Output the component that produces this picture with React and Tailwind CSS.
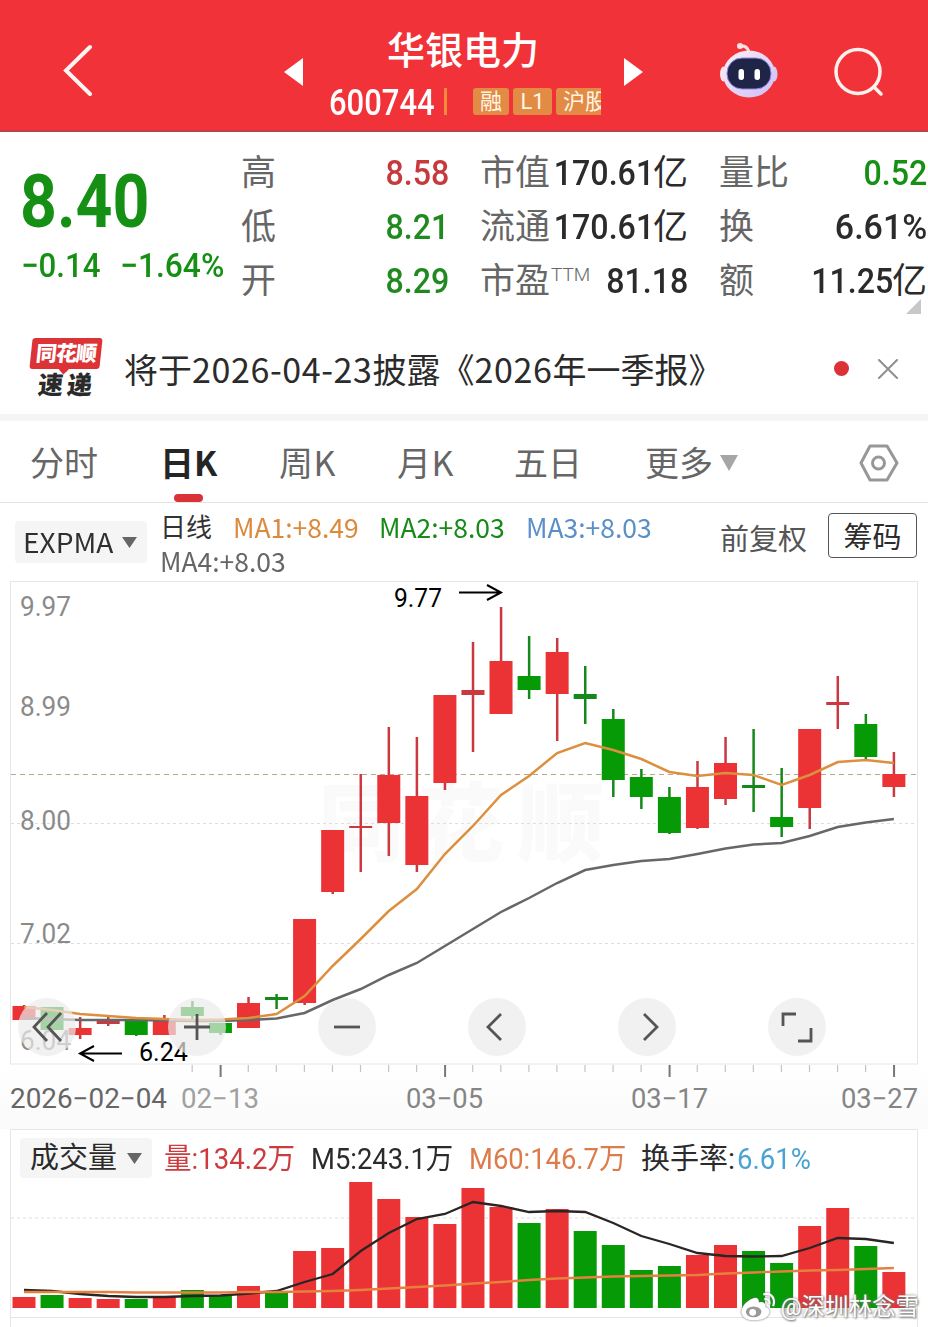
import React from "react";

const UP = "#eb3235";
const DOWN = "#069a06";
const STEP = 28.06;

const cx = (i) => 24 + i * STEP;

// [high, body top, body bottom, low, rising]
const candles = [
  [1005, 1006, 1020, 1020, 1],
  [1007, 1007, 1030, 1030, 0],
  [1017, 1028, 1035, 1039, 1],
  [1015, 1021, 1024, 1026, 1],
  [1021, 1021, 1035, 1036, 0],
  [1015, 1019, 1035, 1035, 1],
  [1001, 1007, 1016, 1019, 0],
  [1023, 1023, 1033, 1035, 0],
  [997, 1003, 1028, 1028, 1],
  [994, 997, 1000, 1009, 0],
  [919, 919, 1003, 1005, 1],
  [830, 830, 892, 894, 1],
  [774, 826, 828, 872, 1],
  [727, 775, 823, 856, 1],
  [737, 796, 865, 872, 1],
  [695, 695, 783, 790, 1],
  [642, 690, 695, 752, 1],
  [607, 661, 714, 714, 1],
  [636, 676, 690, 699, 0],
  [638, 652, 694, 741, 1],
  [666, 694, 699, 724, 0],
  [709, 719, 780, 797, 0],
  [769, 777, 797, 809, 0],
  [787, 797, 833, 834, 0],
  [761, 787, 828, 829, 1],
  [737, 763, 799, 805, 1],
  [729, 785, 788, 812, 0],
  [768, 817, 827, 837, 0],
  [729, 729, 808, 829, 1],
  [676, 702, 705, 729, 1],
  [714, 724, 757, 759, 0],
  [752, 774, 787, 797, 1],
];

const fastLine = [
  1007, 1010, 1014, 1016, 1018, 1019, 1020, 1019.5, 1018, 1014, 996, 966, 939, 911, 889, 854,
  826, 795, 776, 753, 743, 750, 759, 772, 776, 773, 775, 785, 775, 762, 760, 763,
];
const slowLine = [
  1018, 1019, 1020, 1020, 1020, 1020.5, 1021, 1021, 1020, 1018.5, 1013, 1000, 989, 975, 963, 946,
  929, 912, 898, 883, 870, 865, 861, 859, 854, 848.5, 844.5, 843, 836, 827, 822.5, 819,
];

const volumes = [
  1297, 1295, 1298, 1299, 1299, 1297, 1290, 1296, 1286, 1292, 1251, 1248, 1182, 1199, 1217, 1224,
  1188, 1207, 1223, 1209, 1231, 1245, 1270, 1266, 1255, 1245, 1251, 1263, 1226, 1208, 1246, 1272,
];
const vol5 = [
  1290, 1291, 1294, 1296, 1297, 1297, 1296, 1295.5, 1293.5, 1291, 1282, 1274, 1251, 1233, 1219, 1214,
  1202, 1206, 1212, 1211, 1212, 1223, 1236, 1244, 1253, 1256, 1256.5, 1256, 1248, 1238, 1239, 1243,
];
const vol60 = [
  1292, 1292, 1292, 1292, 1292.5, 1292.5, 1292.5, 1292.5, 1292, 1292, 1291.5, 1291, 1290, 1288.5, 1287, 1285.5,
  1283.5, 1282, 1280, 1278.5, 1277.5, 1276.5, 1276, 1275.5, 1275, 1273.5, 1272.5, 1271.5, 1270.5, 1270, 1269, 1268,
];

const toPoints = (line) => line.map((y, i) => `${cx(i)},${y}`).join(" ");

// flat candles are drawn in the darker wick colour
const bodyColor = (up, height) => {
  if (height > 5) return up ? UP : DOWN;
  return up ? "#c9393f" : "#15881a";
};

function ChartText({ x, y, w, size = 27, fill = "#8b8b8b", children }) {
  return (
    <text x={x} y={y} fontSize={size} fill={fill} textLength={w} lengthAdjust="spacingAndGlyphs">
      {children}
    </text>
  );
}

function Header() {
  return (
    <header className="h-[132px] bg-[#f13239] border-b-2 border-[#b8434a] flex items-start text-white">
      <svg className="w-[32px] h-[52px] ml-[62px] mt-[44px]" viewBox="0 0 32 52" fill="none" stroke="#fff5f2" strokeWidth="4" strokeLinecap="round">
        <path d="M28 3 L4 26.500 L28 50" />
      </svg>
      <svg className="w-[20px] h-[28px] ml-[190px] mt-[58px]" viewBox="0 0 20 28" fill="#fff">
        <path d="M0 14 L19 0 V28 Z" />
      </svg>
      <div className="ml-[25px] w-[272px] pt-[32px]">
        <h1 className="ml-[58px] text-[38px] leading-[38px] font-medium whitespace-nowrap">华银电力</h1>
        <div className="flex items-start mt-[18px] h-[30px]">
          <span className="w-[105px] text-[36px] leading-[30px] font-medium">
            <span className="inline-block origin-left scale-x-[.86]">600744</span>
          </span>
          <span className="w-[3px] h-[27px] ml-[10px] bg-[#f28b3c]" />
          <div className="ml-[26px] w-[128px] flex gap-[4px] overflow-hidden text-[22px] leading-[27px] whitespace-nowrap text-[#fff6e6]">
            <span className="w-[36px] shrink-0 rounded-[3px] bg-[#e28b45] text-center">融</span>
            <span className="w-[39px] shrink-0 rounded-[3px] bg-[#e28b45] text-center">L1</span>
            <span className="w-[60px] shrink-0 rounded-[3px] bg-[#e28b45] pl-[7px]">沪股</span>
          </div>
        </div>
      </div>
      <svg className="w-[20px] h-[28px] ml-[23px] mt-[58px]" viewBox="0 0 20 28" fill="#fff">
        <path d="M0 0 L19 14 L0 28 Z" />
      </svg>
      <svg className="w-[60px] h-[58px] ml-[75px] mt-[42px]" viewBox="0 0 60 58">
        <defs>
          <linearGradient id="shell" x1="0" y1="0" x2="1" y2="1">
            <stop offset="0" stopColor="#fff1f2" />
            <stop offset=".55" stopColor="#e3d5f5" />
            <stop offset="1" stopColor="#cdbcf7" />
          </linearGradient>
        </defs>
        <path d="M21 4 Q28 3 30 10" fill="none" stroke="#ffd9dc" strokeWidth="3" />
        <circle cx="21" cy="4" r="3" fill="#ffe3e5" />
        <ellipse cx="4.500" cy="32" rx="3.500" ry="7.500" fill="#f8e3ee" />
        <ellipse cx="55" cy="32" rx="3.500" ry="7.500" fill="#d8c8f6" />
        <ellipse cx="30" cy="32" rx="26" ry="23.500" fill="url(#shell)" />
        <rect x="8" y="16" width="44" height="31" rx="15" fill="#1e2547" stroke="#8f88e8" strokeWidth="1" />
        <rect x="19.500" y="27" width="5.500" height="11" rx="2.700" fill="#fff" />
        <rect x="35.500" y="27" width="5.500" height="11" rx="2.700" fill="#fff" />
      </svg>
      <svg className="w-[52px] h-[52px] ml-[54px] mt-[46px]" viewBox="0 0 52 52" fill="none" stroke="#fff0ee" strokeWidth="3.500" strokeLinecap="round">
        <circle cx="25" cy="25.500" r="22" />
        <path d="M41 41 L48 48" />
      </svg>
    </header>
  );
}

function Stat({ label, sup, value, unit, color = "text-[#2b2b2b]" }) {
  return (
    <div className="flex h-[54px] items-center justify-between whitespace-nowrap text-[35px] leading-none">
      <span className="flex text-[#666]">
        {label}
        {sup && <sup className="ml-px top-[1px] h-[20px] text-[19px] leading-none font-light">{sup}</sup>}
      </span>
      <span className={`-ml-[12px] flex font-medium ${color}`}>
        <span className={`origin-right ${value.endsWith("%") ? "scale-x-[.97]" : "scale-x-[.92]"}`}>{value}</span>
        {unit && <span className="-ml-[1px] font-normal">{unit}</span>}
      </span>
    </div>
  );
}

function Quote() {
  return (
    <section className="relative flex h-[198px] pt-[14px]">
      <div className="ml-[20px] w-[221px] text-[#159015]">
        <div className="mt-[20px] h-[72px] text-[74px] leading-[72px] font-bold">
          <span className="inline-block origin-left scale-x-[.87]">8.40</span>
        </div>
        <div className="mt-[10px] ml-px flex text-[34px] leading-[34px] font-medium whitespace-nowrap">
          <span className="w-[99px]">
            <span className="inline-block origin-left scale-x-[.92]">−0.14</span>
          </span>
          <span className="inline-block origin-left scale-x-[.935]">−1.64%</span>
        </div>
      </div>
      <div className="w-[208px]">
        <Stat label="高" value="8.58" color="text-[#c53a3d]" />
        <Stat label="低" value="8.21" color="text-[#208a20]" />
        <Stat label="开" value="8.29" color="text-[#208a20]" />
      </div>
      <div className="ml-[31px] w-[208px]">
        <Stat label="市值" value="170.61" unit="亿" />
        <Stat label="流通" value="170.61" unit="亿" />
        <Stat label="市盈" sup="TTM" value="81.18" />
      </div>
      <div className="ml-[31px] w-[208px]">
        <Stat label="量比" value="0.52" color="text-[#159015]" />
        <Stat label="换" value="6.61%" />
        <Stat label="额" value="11.25" unit="亿" />
      </div>
      <svg className="absolute right-[7px] top-[167px] h-[15px] w-[15px]" viewBox="0 0 15 15" fill="#c8c8c8">
        <path d="M15 0 V15 H0 Z" />
      </svg>
    </section>
  );
}

function News() {
  return (
    <section className="flex h-[91px] items-start border-b-[7px] border-[#f5f5f5]">
      <div className="ml-[31px] mt-[8px] w-[72px]">
        <div className="relative h-[31px] w-[70px] -skew-x-6 rounded-[3px] bg-[#dc3337] text-center text-[21px] leading-[32px] font-black whitespace-nowrap text-white">
          <span className="inline-block -tracking-[1px]">同花顺</span>
          <span className="absolute left-[31px] top-[28px] h-[7px] w-[7px] rotate-45 bg-[#dc3337]" />
        </div>
        <div className="mt-[4px] ml-[7px] flex -skew-x-6 gap-[4px] text-[25px] leading-[26px] font-black text-[#2a2a2a]">
          <span>速</span>
          <span>递</span>
        </div>
      </div>
      <p className="ml-[21px] mt-[20px] h-[38px] w-[660px] text-[34px] leading-[38px] whitespace-nowrap text-[#2b2b2b] font-['Noto_Sans_CJK_SC',sans-serif]">
        将于<span className="tracking-[.6px]">2026-04-23</span>披露《<span className="tracking-[.6px]">2026</span>年一季报》
      </p>
      <span className="ml-[50px] mt-[31px] h-[15px] w-[15px] rounded-full bg-[#dc3237]" />
      <svg className="ml-[29px] mt-[29px] h-[20px] w-[20px]" viewBox="0 0 20 20" stroke="#8f8f8f" strokeWidth="2" strokeLinecap="round">
        <path d="M1 1 L19 19 M19 1 L1 19" />
      </svg>
    </section>
  );
}

function Tabs() {
  return (
    <nav className="flex h-[82px] items-start border-b border-[#e4e4e4] pt-[22px] text-[34px] leading-[38px] whitespace-nowrap text-[#666] font-['Noto_Sans_CJK_SC',sans-serif]">
      <span className="ml-[30px] w-[130px]">分时</span>
      <span className="relative w-[119px] font-bold text-[#252525]">
        日K
        <span className="absolute left-[14px] top-[51px] h-[8px] w-[29px] rounded-full bg-[#d93237]" />
      </span>
      <span className="w-[118px] tracking-[.5px]">周K</span>
      <span className="w-[117px] tracking-[.5px]">月K</span>
      <span className="w-[131px]">五日</span>
      <span className="w-[75px]">更多</span>
      <svg className="mt-[12px] h-[16px] w-[18px]" viewBox="0 0 18 16" fill="#a6a6a6">
        <path d="M0 0 H18 L9 16 Z" />
      </svg>
      <svg className="ml-[121px] mt-px h-[38px] w-[40px]" viewBox="0 0 40 38" fill="none" stroke="#979797" strokeWidth="3" strokeLinejoin="round">
        <path d="M11 2 H28 L38 19 L28 36 H11 L2 19 Z" />
        <circle cx="19.500" cy="19" r="6" />
      </svg>
    </nav>
  );
}

function Indicators() {
  return (
    <section className="flex h-[78px] items-start whitespace-nowrap text-[27px] leading-[32px] font-['Noto_Sans_CJK_SC',sans-serif]">
      <div className="ml-[15px] mt-[18px] flex h-[42px] w-[132px] items-center rounded-[4px] bg-[#f5f5f5] pl-[8px] text-[#2f2f2f]">
        <span className="w-[99px]">
          <span className="inline-block origin-left scale-x-[1.04]">EXPMA</span>
        </span>
        <svg className="h-[11px] w-[15px]" viewBox="0 0 15 11" fill="#666">
          <path d="M0 0 H15 L7.500 11 Z" />
        </svg>
      </div>
      <div className="ml-[13px] mt-[8px] w-[560px]">
        <div className="flex">
          <span className="w-[73px] text-[26px] leading-[30px] text-[#333]">日线</span>
          <span className="w-[146px] text-[#db8a3c]">
            <span className="inline-block origin-left scale-x-[.98]">MA1:+8.49</span>
          </span>
          <span className="w-[147px] text-[#178a17]">
            <span className="inline-block origin-left scale-x-[.98]">MA2:+8.03</span>
          </span>
          <span className="inline-block origin-left scale-x-[.98] text-[#5a8fc8]">MA3:+8.03</span>
        </div>
        <div className="mt-[2px] text-[#666]">
          <span className="inline-block origin-left scale-x-[.98]">MA4:+8.03</span>
        </div>
      </div>
      <span className="mt-[18px] w-[108px] text-[29px] text-[#555]">前复权</span>
      <span className="mt-[10px] h-[45px] w-[89px] rounded-[4px] border border-[#555] text-center text-[29px] leading-[43px] text-[#2b2b2b]">筹码</span>
    </section>
  );
}

const toolIcons = [
  ["M14 -14 L1 0 L14 14 M0 -14 L-13 0 L0 14", "prev"],
  ["M-13 0 H13 M0 -13 V13", "zoom in"],
  ["M-13 0 H13", "zoom out"],
  ["M4 -13 L-9 0 L4 13", "left"],
  ["M-3 -13 L10 0 L-3 13", "right"],
  ["M-14 -1 V-13 H-1 M14 1 V14 H1", "full screen"],
];

function KChart() {
  return (
    <section className="relative h-[548px] bg-gradient-to-b from-white from-88% to-[#fafafa]">
      <svg className="block h-[548px] w-full" viewBox="0 581 928 548">
        <text x="318" y="855" fontSize="86" fontWeight="900" textLength="286" fill="#000" fillOpacity=".018">同花顺</text>
        <rect x="10.500" y="581.500" width="907" height="482.500" fill="none" stroke="#e6e6e6" />
        <path d="M11 823.500 H917 M11 943.500 H917" stroke="#dedede" strokeDasharray="3 3" />
        <path d="M11 774.500 H917" stroke="#b8a88a" strokeDasharray="5 4" />
        <ChartText x={20} y={616} w={51}>9.97</ChartText>
        <ChartText x={20} y={716} w={51}>8.99</ChartText>
        <ChartText x={20} y={830} w={51}>8.00</ChartText>
        <ChartText x={20} y={943} w={51}>7.02</ChartText>
        <ChartText x={20} y={1050} w={51}>6.04</ChartText>
        {candles.map(([high, top, bottom, low, up], i) => (
          <g key={i}>
            <rect x={cx(i) - 1.2} y={high} width="2.500" height={low - high} fill={up ? "#c9393f" : "#15881a"} />
            <rect x={cx(i) - 11.5} y={top} width="23" height={bottom - top} fill={bodyColor(up, bottom - top)} />
          </g>
        ))}
        <polyline points={toPoints(slowLine)} fill="none" stroke="#666769" strokeWidth="2.500" />
        <polyline points={toPoints(fastLine)} fill="none" stroke="#dc903f" strokeWidth="2.500" />
        <g fill="none" stroke="#000" strokeWidth="2">
          <path d="M459 592.500 H500 M487 585 L501 592.500 L487 600" />
          <path d="M122 1053.500 H81 M94 1046 L80 1053.500 L94 1061" />
        </g>
        <ChartText x={394} y={607} w={48} size={26} fill="#000">9.77</ChartText>
        <ChartText x={139} y={1061} w={49} size={26} fill="#000">6.24</ChartText>
        {candles.map((_, i) => {
          const major = i === 7 || i === 15 || i === 23 || i === 31;
          if (i < 6) return null;
          return (
            <rect key={i} x={cx(i) - 0.8} y={1065} width={major ? 2 : 1.2} height={major ? 12 : 7} fill={major ? "#777" : "#c4c4c4"} />
          );
        })}
        <ChartText x={10} y={1108} w={157} fill="#666">2026−02−04</ChartText>
        <ChartText x={181} y={1108} w={78} fill="#a0a0a0">02−13</ChartText>
        <ChartText x={406} y={1108} w={77} fill="#858585">03−05</ChartText>
        <ChartText x={631} y={1108} w={77} fill="#858585">03−17</ChartText>
        <ChartText x={841} y={1108} w={77} fill="#858585">03−27</ChartText>
      </svg>
      <div className="absolute left-[18px] top-[417px] flex gap-[92px]">
        {toolIcons.map(([d, name]) => (
          <button key={name} aria-label={name} className="h-[58px] w-[58px] rounded-full bg-[#ebebeb]/70">
            <svg className="h-[58px] w-[58px]" viewBox="-29 -29 58 58" fill="none" stroke="#555" strokeWidth="2.800">
              <path d={d} />
            </svg>
          </button>
        ))}
      </div>
    </section>
  );
}

function VolumeChart() {
  return (
    <section className="relative mx-[10px] h-[189px] border border-[#e6e6e6]">
      <div className="flex h-[50px] items-start pt-[8px] text-[29px] leading-[42px] whitespace-nowrap">
        <div className="ml-[9px] flex h-[40px] w-[132px] items-center rounded-[4px] bg-[#f5f5f5] pl-[10px] text-[#2b2b2b]">
          <span className="w-[97px]">成交量</span>
          <svg className="h-[11px] w-[15px]" viewBox="0 0 15 11" fill="#666">
            <path d="M0 0 H15 L7.500 11 Z" />
          </svg>
        </div>
        <span className="ml-[12px] w-[147px] text-[#cc3c3f]">
          <span className="inline-block origin-left scale-x-[.95]">量:134.2万</span>
        </span>
        <span className="w-[158px] text-[#2b2b2b]">
          <span className="inline-block origin-left scale-x-[.945]">M5:243.1万</span>
        </span>
        <span className="w-[172px] text-[#dd7b4b]">
          <span className="inline-block origin-left scale-x-[.943]">M60:146.7万</span>
        </span>
        <span className="w-[96px] text-[#2b2b2b]">换手率:</span>
        <span className="inline-block origin-left scale-x-[.95] text-[#4ba3d3]">6.61%</span>
      </div>
      <svg className="block h-[137px] w-full" viewBox="11 1180 906 137" preserveAspectRatio="none">
        <path d="M11 1218 H917" stroke="#dedede" strokeDasharray="3 3" />
        {volumes.map((top, i) => (
          <rect key={i} x={cx(i) - 11.5} y={top} width="23" height={1308 - top} fill={candles[i][4] ? UP : DOWN} />
        ))}
        <polyline points={toPoints(vol5)} fill="none" stroke="#2a2424" strokeWidth="2.300" />
        <polyline points={toPoints(vol60)} fill="none" stroke="#e5803f" strokeWidth="2.300" />
      </svg>
      <div className="absolute right-[-2px] top-[159px] flex items-center text-[23.500px] leading-[36px] whitespace-nowrap text-white [text-shadow:0_0_3px_#777,1px_1px_2px_#777]">
        <svg className="mr-[4px] h-[32px] w-[35px] drop-shadow-[0_0_1px_#666]" viewBox="0 0 36 32" fill="none" stroke="#fff" strokeWidth="2.200">
          <path d="M13 8 C5 11 0 18 2 23 C5 31 25 30 28 22 C29 18 25 17 24 17 C25 12 22 11 17 13 C18 8 16 7 13 8 Z" fill="#fff" />
          <ellipse cx="13" cy="21" rx="8" ry="5.500" fill="#999" stroke="none" />
          <circle cx="12" cy="21.500" r="3.500" fill="#fff" stroke="none" />
          <path d="M24 8 C28 7 30 10 29 13 M23 3 C31 1 36 7 33 15" />
        </svg>
        @深圳林念雪
      </div>
    </section>
  );
}

export default function App() {
  return (
    <div className="h-[1327px] w-[928px] overflow-hidden bg-white font-[Roboto,'Noto_Sans_CJK_SC',sans-serif]">
      <Header />
      <Quote />
      <News />
      <Tabs />
      <Indicators />
      <KChart />
      <VolumeChart />
      <div className="mx-[10px] h-[9px] border-x border-[#e6e6e6]" />
    </div>
  );
}
